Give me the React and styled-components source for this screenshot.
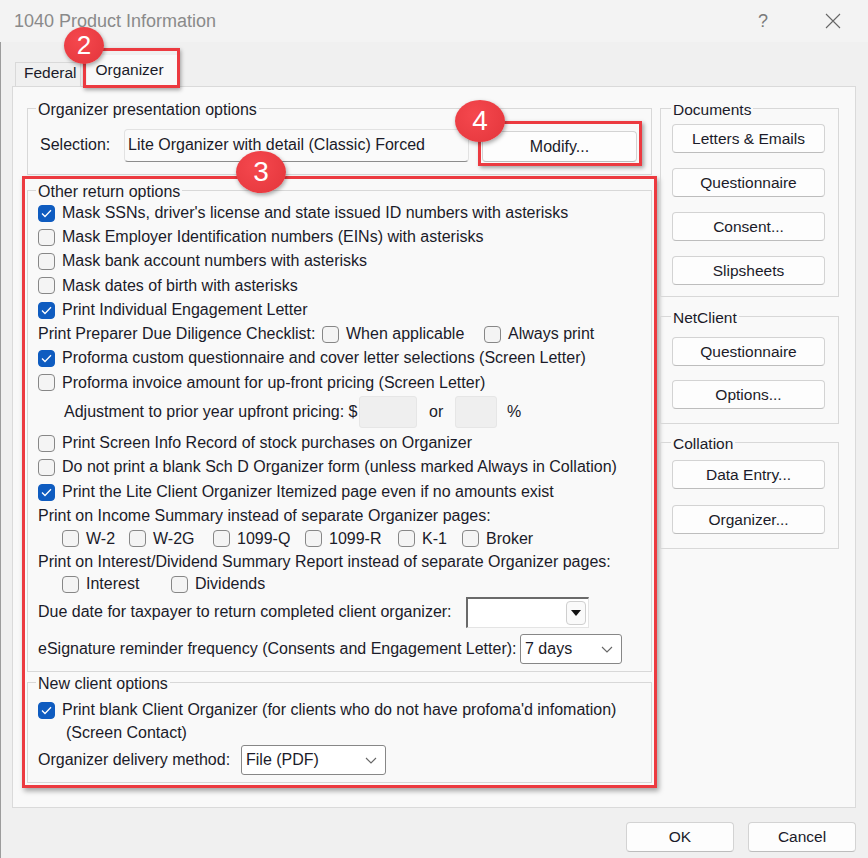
import React from "react";
import styled, { createGlobalStyle } from "styled-components";

const Global = createGlobalStyle`
  html, body { margin: 0; padding: 0; background: #f0f0f0; overflow: hidden; }
  * { box-sizing: border-box; }
  body { font-family: "Liberation Sans", Arial, sans-serif; font-size: 16px; color: #1b1b29; }
`;

const RED = "#ec3a40";

const Window = styled.div`
  position: relative;
  width: 868px;
  height: 858px;
  background: #f0f0f0;
  box-shadow: inset 1px 0 0 #9c9c9c;
  border-top-left-radius: 8px;
  display: flex;
  flex-direction: column;
`;

const TitleBar = styled.div`
  height: 42px;
  display: flex;
  align-items: center;
  padding-left: 14px;
  background: #f3f3f3;
`;

const Title = styled.div`
  flex: 1;
  font-size: 18px;
  color: #8a8a8a;
`;

const TitleButton = styled.div`
  width: 70px;
  display: flex;
  align-items: center;
  justify-content: center;
  color: #7a7a7a;
  font-size: 18px;
`;

const TabStrip = styled.div`
  height: 44px;
  display: flex;
  align-items: flex-end;
  padding-left: 15px;
  position: relative;
  z-index: 2;
`;

const Tab = styled.div`
  height: 24px;
  padding: 1px 3px 0 8px;
  display: flex;
  align-items: flex-start;
  border: 1px solid #d9d9d9;
  border-bottom: none;
  background: #f0f0f0;
  font-size: 15.5px;
`;

const TabFrame = styled.div`
  margin-left: 2px;
  margin-bottom: -2px;
  width: 97px;
  height: 40px;
  border: 3px solid ${RED};
  box-shadow: 1px 2px 4px rgba(0, 0, 0, 0.35);
  display: flex;
  align-items: flex-end;
  padding-left: 1px;
`;

const ActiveTab = styled.div`
  width: 90px;
  height: 30px;
  display: flex;
  align-items: flex-start;
  padding: 6px 0 0 9px;
  background: #f9f9f9;
  font-size: 15.5px;
`;

const Panel = styled.div`
  margin-left: 12px;
  width: 844px;
  height: 722px;
  border: 1px solid #dadada;
  background: #f9f9f9;
  padding: 12px 16px 0 14px;
  display: flex;
  gap: 8px;
`;

const LeftCol = styled.div`
  width: 625px;
  display: flex;
  flex-direction: column;
`;

const RightCol = styled.div`
  width: 179px;
  display: flex;
  flex-direction: column;
`;

const Group = styled.fieldset`
  margin: ${(p) => p.$mt || 0}px 0 0 0;
  padding: 0;
  border: 1px solid #d8d8d8;
  min-width: 0;
`;

const GroupBody = styled.div`
  padding: ${(p) => p.$pad};
  display: flex;
  flex-direction: column;
  gap: ${(p) => p.$gap || 0}px;
`;

const Legend = styled.legend`
  margin-left: ${(p) => p.$ml || 8}px;
  padding: 3px 2px 0;
  line-height: 15px;
  font-size: ${(p) => p.$fs || 16}px;
`;

const SelRow = styled.div`
  display: flex;
  align-items: flex-start;
`;

const FieldLabel = styled.div`
  width: ${(p) => p.$w}px;
  flex: none;
  margin-top: ${(p) => p.$mt || 0}px;
  white-space: nowrap;
`;

const ReadOnlyBox = styled.div`
  margin-top: 8px;
  width: 345px;
  height: 33px;
  border: 1px solid #e2e2e2;
  border-bottom: 1px solid #8c8c8c;
  border-radius: 4px;
  background: #fafafa;
  padding: 6px 0 0 3px;
  white-space: nowrap;
`;

const ModifyFrame = styled.div`
  margin-left: 9px;
  width: 164px;
  height: 45px;
  border: 3px solid ${RED};
  box-shadow: 2px 2px 4px rgba(0, 0, 0, 0.35);
  padding: 7px 2px 1px 1px;
  display: flex;
`;

const Button = styled.div`
  width: ${(p) => p.$w || 153}px;
  height: ${(p) => p.$h || 29}px;
  flex: none;
  background: #fdfdfd;
  border: 1px solid #d3d3d3;
  border-bottom-color: #bdbdbd;
  border-radius: 4px;
  display: flex;
  align-items: center;
  justify-content: center;
  font-size: ${(p) => p.$fs || 15.5}px;
  white-space: nowrap;
`;

const HighlightFrame = styled.div`
  margin: 1px -5px 0 -5px;
  border: 3px solid ${RED};
  box-shadow: 2px 3px 5px rgba(0, 0, 0, 0.35);
  padding: 0 2px 2px 2px;
  display: flex;
  flex-direction: column;
`;

const Row = styled.div`
  height: ${(p) => p.$h || 24}px;
  margin-top: ${(p) => p.$mt || 0}px;
  padding-left: ${(p) => p.$pl || 0}px;
  display: flex;
  align-items: center;
  white-space: nowrap;
  flex: none;
`;

const CheckItem = styled.label`
  display: flex;
  align-items: center;
  gap: 7px;
  width: ${(p) => (p.$w ? `${p.$w}px` : "auto")};
  flex: none;
`;

const Box = styled.span`
  width: 17px;
  height: 17px;
  flex: none;
  border-radius: 4px;
  border: 1px solid ${(p) => (p.$on ? "#0f5cc0" : "#878787")};
  background: ${(p) => (p.$on ? "#0f5cc0" : "#f4f4f4")};
  display: flex;
  align-items: center;
  justify-content: center;
`;

const Check = ({ on, children, w }) => (
  <CheckItem $w={w}>
    <Box $on={on}>
      {on && (
        <svg width="11" height="9" viewBox="0 0 11 9">
          <polyline points="1,4.5 4,7.5 10,1.2" fill="none" stroke="#fff" strokeWidth="1.3" />
        </svg>
      )}
    </Box>
    <span>{children}</span>
  </CheckItem>
);

const NumBox = styled.div`
  width: ${(p) => p.$w}px;
  height: 32px;
  flex: none;
  background: #efefef;
  border: 1px solid #e6e6e6;
  border-radius: 3px;
`;

const Gap = styled.span`
  width: ${(p) => p.$w}px;
  flex: none;
  padding-left: ${(p) => p.$pl || 0}px;
`;

const DateCombo = styled.div`
  width: 123px;
  height: 31px;
  flex: none;
  background: #fff;
  border-top: 2px solid #6a6a6a;
  border-left: 2px solid #6a6a6a;
  border-right: 1px solid #e4e4e4;
  border-bottom: 1px solid #e4e4e4;
  display: flex;
  justify-content: flex-end;
  align-items: center;
  padding-right: 2px;
`;

const DropBtn = styled.div`
  width: 20px;
  height: 24px;
  border: 1px solid #cfcfcf;
  border-radius: 4px;
  background: #fafafa;
  display: flex;
  align-items: center;
  justify-content: center;
`;

const Select = styled.div`
  width: ${(p) => p.$w}px;
  height: 30px;
  flex: none;
  background: #fff;
  border: 1px solid #878787;
  border-radius: 3px;
  display: flex;
  align-items: center;
  justify-content: space-between;
  padding: 0 8px 0 4px;
`;

const Chevron = () => (
  <svg width="12" height="7" viewBox="0 0 12 7">
    <polyline points="1,1 6,6 11,1" fill="none" stroke="#666" strokeWidth="1.1" />
  </svg>
);

const Footer = styled.div`
  flex: 1;
  display: flex;
  justify-content: flex-end;
  align-items: flex-start;
  padding: 14px 12px 0 0;
  gap: 14px;
`;

const Badge = styled.div`
  position: absolute;
  left: ${(p) => p.$x}px;
  top: ${(p) => p.$y}px;
  width: ${(p) => p.$w}px;
  height: ${(p) => p.$h}px;
  border-radius: 50%;
  background: radial-gradient(circle at 40% 35%, #f5484e, #e3353b);
  box-shadow: 1px 2px 4px rgba(0, 0, 0, 0.35);
  color: #fff;
  font-family: "Liberation Sans", Arial, sans-serif;
  font-size: ${(p) => p.$fs}px;
  display: flex;
  align-items: center;
  justify-content: center;
  z-index: 5;
`;

export default function App() {
  return (
    <>
      <Global />
      <Window>
        <TitleBar>
          <Title>1040 Product Information</Title>
          <TitleButton>?</TitleButton>
          <TitleButton>
            <svg width="16" height="16" viewBox="0 0 16 16">
              <path d="M1 1 L15 15 M15 1 L1 15" stroke="#666" strokeWidth="1.1" />
            </svg>
          </TitleButton>
        </TitleBar>

        <TabStrip>
          <Tab>Federal</Tab>
          <TabFrame>
            <ActiveTab>Organizer</ActiveTab>
          </TabFrame>
        </TabStrip>

        <Panel>
          <LeftCol>
            <Group>
              <Legend>Organizer presentation options</Legend>
              <GroupBody $pad="4px 0 8px 12px">
                <SelRow>
                  <FieldLabel $w={84} $mt={15}>Selection:</FieldLabel>
                  <ReadOnlyBox>Lite Organizer with detail (Classic) Forced</ReadOnlyBox>
                  <ModifyFrame>
                    <Button $w={155} $h={31} $fs={16}>Modify...</Button>
                  </ModifyFrame>
                </SelRow>
              </GroupBody>
            </Group>

            <HighlightFrame>
              <Group $mt={2}>
                <Legend>Other return options</Legend>
                <GroupBody $pad="2px 0 6px 10px">
                  <Row><Check on>Mask SSNs, driver's license and state issued ID numbers with asterisks</Check></Row>
                  <Row><Check>Mask Employer Identification numbers (EINs) with asterisks</Check></Row>
                  <Row><Check>Mask bank account numbers with asterisks</Check></Row>
                  <Row $h={25}><Check>Mask dates of birth with asterisks</Check></Row>
                  <Row><Check on>Print Individual Engagement Letter</Check></Row>
                  <Row>
                    <FieldLabel $w={284}>Print Preparer Due Diligence Checklist:</FieldLabel>
                    <Check w={162}>When applicable</Check>
                    <Check>Always print</Check>
                  </Row>
                  <Row><Check on>Proforma custom questionnaire and cover letter selections (Screen Letter)</Check></Row>
                  <Row $h={25}><Check>Proforma invoice amount for up-front pricing (Screen Letter)</Check></Row>
                  <Row $h={34} $pl={26}>
                    <FieldLabel $w={295}>Adjustment to prior year upfront pricing: $</FieldLabel>
                    <NumBox $w={58} />
                    <Gap $w={38} $pl={12}>or</Gap>
                    <NumBox $w={42} />
                    <Gap $w={20} $pl={10}>%</Gap>
                  </Row>
                  <Row $mt={2}><Check>Print Screen Info Record of stock purchases on Organizer</Check></Row>
                  <Row><Check>Do not print a blank Sch D Organizer form (unless marked Always in Collation)</Check></Row>
                  <Row $h={26}><Check on>Print the Lite Client Organizer Itemized page even if no amounts exist</Check></Row>
                  <Row $h={21}>Print on Income Summary instead of separate Organizer pages:</Row>
                  <Row $h={25} $pl={24}>
                    <Check w={67}>W-2</Check>
                    <Check w={84}>W-2G</Check>
                    <Check w={92}>1099-Q</Check>
                    <Check w={93}>1099-R</Check>
                    <Check w={64}>K-1</Check>
                    <Check>Broker</Check>
                  </Row>
                  <Row $h={21}>Print on Interest/Dividend Summary Report instead of separate Organizer pages:</Row>
                  <Row $pl={24}>
                    <Check w={109}>Interest</Check>
                    <Check>Dividends</Check>
                  </Row>
                  <Row $h={32}>
                    <FieldLabel $w={428}>Due date for taxpayer to return completed client organizer:</FieldLabel>
                    <DateCombo>
                      <DropBtn>
                        <svg width="10" height="6" viewBox="0 0 10 6">
                          <polygon points="0,0 10,0 5,6" fill="#111" />
                        </svg>
                      </DropBtn>
                    </DateCombo>
                  </Row>
                  <Row $h={32} $mt={5}>
                    <FieldLabel $w={482}>eSignature reminder frequency (Consents and Engagement Letter):</FieldLabel>
                    <Select $w={102}>
                      <span>7 days</span>
                      <Chevron />
                    </Select>
                  </Row>
                </GroupBody>
              </Group>

              <Group $mt={1}>
                <Legend>New client options</Legend>
                <GroupBody $pad="7px 0 6px 10px">
                  <Row><Check on>Print blank Client Organizer (for clients who do not have profoma'd infomation)</Check></Row>
                  <Row $h={22} $pl={28}>(Screen Contact)</Row>
                  <Row $h={32}>
                    <FieldLabel $w={203}>Organizer delivery method:</FieldLabel>
                    <Select $w={145}>
                      <span>File (PDF)</span>
                      <Chevron />
                    </Select>
                  </Row>
                </GroupBody>
              </Group>
            </HighlightFrame>
          </LeftCol>

          <RightCol>
            <Group>
              <Legend $ml={10} $fs={15.5}>Documents</Legend>
              <GroupBody $pad="7px 13px 11px 11px" $gap={15}>
                <Button>Letters &amp; Emails</Button>
                <Button>Questionnaire</Button>
                <Button>Consent...</Button>
                <Button>Slipsheets</Button>
              </GroupBody>
            </Group>
            <Group $mt={10}>
              <Legend $ml={10} $fs={15.5}>NetClient</Legend>
              <GroupBody $pad="12px 13px 14px 11px" $gap={14}>
                <Button>Questionnaire</Button>
                <Button>Options...</Button>
              </GroupBody>
            </Group>
            <Group $mt={9}>
              <Legend $ml={10} $fs={15.5}>Collation</Legend>
              <GroupBody $pad="9px 13px 14px 11px" $gap={16}>
                <Button>Data Entry...</Button>
                <Button>Organizer...</Button>
              </GroupBody>
            </Group>
          </RightCol>
        </Panel>

        <Footer>
          <Button $w={108} $h={30}>OK</Button>
          <Button $w={108} $h={30}>Cancel</Button>
        </Footer>

        <Badge $x={64} $y={27} $w={40} $h={37} $fs={26}>2</Badge>
        <Badge $x={236} $y={151} $w={50} $h={42} $fs={28}>3</Badge>
        <Badge $x={455} $y={100} $w={50} $h={42} $fs={28}>4</Badge>
      </Window>
    </>
  );
}
